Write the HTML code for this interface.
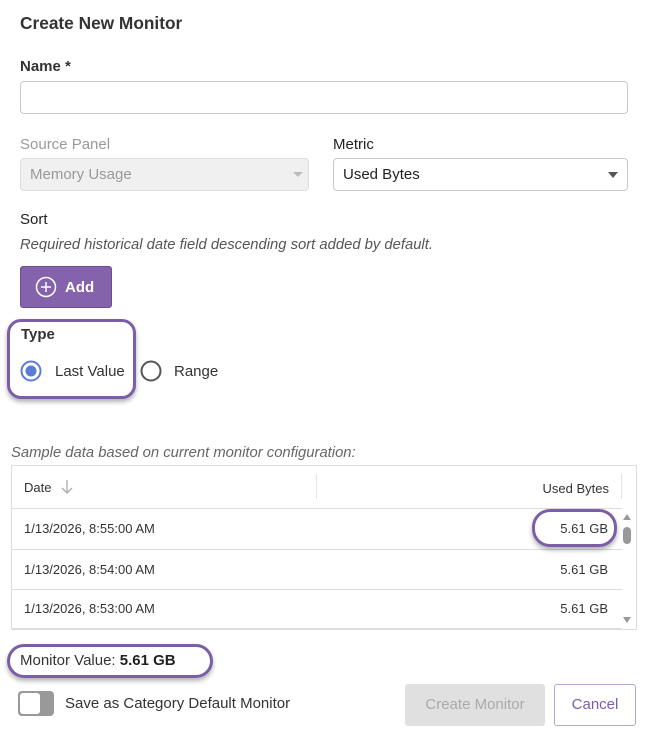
<!DOCTYPE html>
<html><head><style>
*{box-sizing:border-box;margin:0;padding:0}
body{width:647px;height:740px;background:#fff;font-family:"Liberation Sans",sans-serif;color:#222;position:relative;overflow:hidden}
.a{position:absolute;white-space:nowrap}
.lbl{font-size:15px;font-weight:bold;color:#333}
.box{position:absolute;border:1px solid #c8c8c8;border-radius:4px}
.tri{position:absolute;width:0;height:0;border-left:6px solid transparent;border-right:6px solid transparent;border-top:6px solid #555}
.hl{position:absolute;border:3px solid #7b5ea7;box-shadow:0 3px 5px rgba(0,0,0,.3)}
.row{position:absolute;left:12px;width:610px;border-top:1px solid #ddd;font-size:13px;color:#333}
</style></head><body>
<div class="a" style="left:20px;top:13px;font-size:17.3px;font-weight:bold;color:#333">Create New Monitor</div>
<div class="a lbl" style="left:20px;top:58px">Name *</div>
<div class="box" style="left:20px;top:81px;width:608px;height:33px"></div>
<div class="a" style="left:20px;top:136px;font-size:15px;color:#999">Source Panel</div>
<div class="a" style="left:333px;top:136px;font-size:15px;color:#222">Metric</div>
<div class="box" style="left:20px;top:158px;width:289px;height:33px;background:#f0f0f0;border-color:#ddd"></div>
<div class="a" style="left:30px;top:166px;font-size:15px;color:#999">Memory Usage</div>
<div class="tri" style="left:293px;top:172px;border-top-color:#bbb;border-left-width:5px;border-right-width:5px;border-top-width:5px"></div>
<div class="box" style="left:333px;top:158px;width:295px;height:33px"></div>
<div class="a" style="left:343px;top:166px;font-size:15px;color:#222">Used Bytes</div>
<div class="tri" style="left:608px;top:172px;border-left-width:5px;border-right-width:5px;border-top-width:6px"></div>
<div class="a" style="left:20px;top:211px;font-size:15px;color:#222">Sort</div>
<div class="a" style="left:20px;top:237px;font-size:14.8px;font-style:italic;color:#555">Required historical date field descending sort added by default.</div>
<div class="a" style="left:20px;top:266px;width:92px;height:42px;background:#8562ac;border-radius:3px;border:1px solid #6c4d91"></div>
<svg class="a" style="left:35px;top:276px" width="22" height="22"><circle cx="11" cy="11" r="9.5" fill="none" stroke="#fff" stroke-width="1.5"/><path d="M11 6v10M6 11h10" stroke="#fff" stroke-width="1.5"/></svg>
<div class="a" style="left:65px;top:279px;font-size:15px;font-weight:bold;color:#fff">Add</div>
<div class="hl" style="left:7px;top:319px;width:129px;height:80px;border-radius:14px"></div>
<div class="a" style="left:21px;top:326px;font-size:15px;font-weight:bold;color:#333">Type</div>
<svg class="a" style="left:20px;top:360px" width="22" height="22"><circle cx="11" cy="11" r="9.5" fill="none" stroke="#5b7bd5" stroke-width="2"/><circle cx="11" cy="11" r="5.5" fill="#5b7bd5"/></svg>
<div class="a" style="left:55px;top:363px;font-size:15px;color:#333">Last Value</div>
<svg class="a" style="left:140px;top:360px" width="22" height="22"><circle cx="11" cy="11" r="9.5" fill="none" stroke="#555" stroke-width="2"/></svg>
<div class="a" style="left:174px;top:363px;font-size:15px;color:#333">Range</div>
<div class="a" style="left:11px;top:445px;font-size:14.8px;font-style:italic;color:#666">Sample data based on current monitor configuration:</div>
<div style="position:absolute;left:11px;top:465px;width:626px;height:165px;border:1px solid #ddd"></div>
<div class="a" style="left:24px;top:480px;font-size:13px;color:#333">Date</div>
<svg class="a" style="left:60px;top:479px" width="14" height="16"><path d="M7 1v13M2 9l5 5 5-5" fill="none" stroke="#aaa" stroke-width="1.3"/></svg>
<div style="position:absolute;left:316px;top:474px;width:1px;height:25px;background:#e3e3e3"></div>
<div style="position:absolute;left:621px;top:474px;width:1px;height:25px;background:#e3e3e3"></div>
<div class="a" style="right:38px;top:481px;font-size:13px;color:#333">Used Bytes</div>
<div class="row" style="top:508px;height:41px"><span class="a" style="left:12px;top:12px">1/13/2026, 8:55:00 AM</span><span class="a" style="right:14px;top:12px">5.61 GB</span></div>
<div class="row" style="top:549px;height:40px"><span class="a" style="left:12px;top:12px">1/13/2026, 8:54:00 AM</span><span class="a" style="right:14px;top:12px">5.61 GB</span></div>
<div class="row" style="top:589px;height:39px"><span class="a" style="left:12px;top:11px">1/13/2026, 8:53:00 AM</span><span class="a" style="right:14px;top:11px">5.61 GB</span></div>
<div style="position:absolute;left:12px;top:628px;width:610px;height:1px;background:#ddd"></div>
<div class="tri" style="left:623px;top:514px;border-top:0;border-bottom:6px solid #999;border-left-width:4px;border-right-width:4px"></div>
<div style="position:absolute;left:623px;top:527px;width:8px;height:17px;background:#999;border-radius:4px"></div>
<div class="tri" style="left:623px;top:617px;border-top-color:#999;border-left-width:4px;border-right-width:4px"></div>
<div class="hl" style="left:532px;top:509px;width:85px;height:38px;border-radius:18px"></div>
<div class="hl" style="left:7px;top:644px;width:206px;height:34px;border-radius:17px"></div>
<div class="a" style="left:20px;top:652px;font-size:15px;color:#333">Monitor Value: <b style="color:#222">5.61 GB</b></div>
<div style="position:absolute;left:18px;top:691px;width:36px;height:25px;background:#999;border-radius:4px"></div>
<div style="position:absolute;left:20px;top:693px;width:20px;height:21px;background:#fff;border-radius:3px"></div>
<div class="a" style="left:65px;top:695px;font-size:15px;color:#333">Save as Category Default Monitor</div>
<div style="position:absolute;left:405px;top:684px;width:140px;height:42px;background:#e0e0e0;border-radius:3px"></div>
<div class="a" style="left:405px;top:696px;width:140px;text-align:center;font-size:15px;color:#aaa">Create Monitor</div>
<div style="position:absolute;left:554px;top:684px;width:82px;height:42px;border:1px solid #b8a5d3;border-radius:3px"></div>
<div class="a" style="left:554px;top:696px;width:82px;text-align:center;font-size:15px;color:#7b5ea7">Cancel</div>
</body></html>
